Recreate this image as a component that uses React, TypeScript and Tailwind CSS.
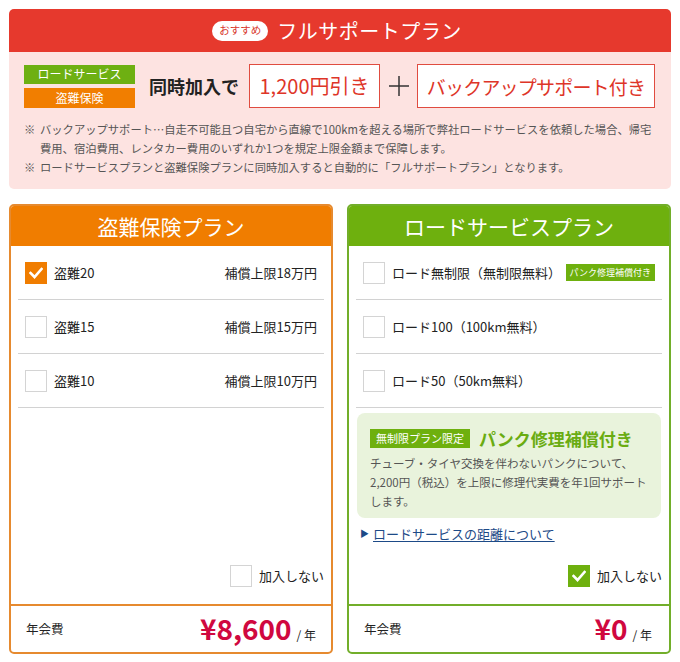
import React from "react";

const Check = () => (
  <svg width="14" height="12" viewBox="0 0 14 12">
    <path d="M1.5 6 L5.5 10 L12.5 2" fill="none" stroke="#fff" strokeWidth="2.6" strokeLinecap="square" />
  </svg>
);

const Box = ({ checked, color }: { checked?: boolean; color: string }) =>
  checked ? (
    <div className={`w-[22px] h-[22px] flex items-center justify-center shrink-0 ${color}`}>
      <Check />
    </div>
  ) : (
    <div className="w-[22px] h-[22px] border border-[#d4d4d4] bg-white shrink-0" />
  );

export default function App() {
  return (
    <div className="w-[680px] h-[662px] bg-white p-[9px] font-['Meiryo','Noto_Sans_CJK_JP',sans-serif] text-[#222]">
      {/* Top box */}
      <div className="rounded-[5px] overflow-hidden">
        <div className="h-[43px] bg-[#e6392d] flex items-center justify-center gap-[9px] pr-[6px]">
          <span className="bg-white text-[#d8352a] rounded-full h-[20px] px-[7px] flex items-center text-[10.5px] leading-none">おすすめ</span>
          <span className="text-white text-[20px] leading-none tracking-[0.5px]">フルサポートプラン</span>
        </div>
        <div className="bg-[#fde3e1] px-[15px] pt-[12px] pb-[12px]">
          <div className="flex items-center">
            <div className="w-[111px] flex flex-col gap-[4px]">
              <div className="h-[19px] bg-[#6eb012] text-white text-[12px] flex items-center justify-center leading-none">ロードサービス</div>
              <div className="h-[20px] bg-[#f17e00] text-white text-[12px] flex items-center justify-center leading-none">盗難保険</div>
            </div>
            <div className="ml-[14px] text-[18px] font-bold text-[#222] leading-none">同時加入で</div>
            <div className="ml-[10px] w-[131px] h-[44px] bg-white border border-[#e04c40] text-[#de3528] text-[20px] flex items-center justify-center leading-none whitespace-nowrap">1,200円引き</div>
            <div className="w-[37px] flex items-center justify-center">
              <svg width="20" height="20" viewBox="0 0 20 20">
                <path d="M10 0 V20 M0 10 H20" stroke="#333" strokeWidth="1.5" />
              </svg>
            </div>
            <div className="w-[238px] h-[44px] bg-white border border-[#e04c40] text-[#de3528] text-[19px] tracking-[-0.8px] flex items-center justify-center leading-none whitespace-nowrap">バックアップサポート付き</div>
          </div>
          <div className="mt-[12px] text-[11.3px] leading-[19px] text-[#555]">
            <div className="flex">
              <span className="w-[16px] shrink-0">※</span>
              <span>バックアップサポート…自走不可能且つ自宅から直線で100kmを超える場所で弊社ロードサービスを依頼した場合、帰宅<br />費用、宿泊費用、レンタカー費用のいずれか1つを規定上限金額まで保障します。</span>
            </div>
            <div className="flex">
              <span className="w-[16px] shrink-0">※</span>
              <span>ロードサービスプランと盗難保険プランに同時加入すると自動的に「フルサポートプラン」となります。</span>
            </div>
          </div>
        </div>
      </div>

      {/* Cards */}
      <div className="mt-[15px] flex gap-[14px]">
        {/* Left */}
        <div className="w-[324px] h-[450px] border-2 border-[#e68a2f] rounded-[5px] overflow-hidden flex flex-col">
          <div className="h-[40px] bg-[#f07d00] text-white text-[21px] flex items-center justify-center leading-none">盗難保険プラン</div>
          {[
            ["盗難20", "補償上限18万円", true],
            ["盗難15", "補償上限15万円", false],
            ["盗難10", "補償上限10万円", false],
          ].map(([a, b, c]) => (
            <div key={a as string} className="mx-[7px] h-[54px] border-b border-[#d2d2d2] flex items-center px-[7px]">
              <Box checked={c as boolean} color="bg-[#f07d00]" />
              <span className="ml-[7px] text-[13px]">{a as string}</span>
              <span className="ml-auto text-[13px]">{b as string}</span>
            </div>
          ))}
          <div className="flex-1 flex items-end justify-end pr-[7px] pb-[17px]">
            <div className="flex items-center gap-[7px]">
              <Box color="" />
              <span className="text-[13px]">加入しない</span>
            </div>
          </div>
          <div className="h-[48px] border-t-2 border-[#e68a2f] flex items-center px-[15px]">
            <span className="text-[12.5px]">年会費</span>
            <span className="ml-auto flex items-baseline">
              <span className="text-[28px] font-bold text-[#d0083f] leading-none">¥8,600</span>
              <span className="ml-[5px] text-[12px]">/ 年</span>
            </span>
          </div>
        </div>

        {/* Right */}
        <div className="w-[324px] h-[450px] border-2 border-[#72ae2a] rounded-[5px] overflow-hidden flex flex-col">
          <div className="h-[40px] bg-[#6eb00e] text-white text-[21px] flex items-center justify-center leading-none">ロードサービスプラン</div>
          <div className="mx-[7px] h-[54px] border-b border-[#d2d2d2] flex items-center px-[7px]">
            <Box color="" />
            <span className="ml-[7px] text-[13px]">ロード無制限（無制限無料）</span>
            <span className="ml-auto bg-[#6eb00e] text-white text-[9px] h-[17px] px-[4px] flex items-center leading-none">パンク修理補償付き</span>
          </div>
          <div className="mx-[7px] h-[54px] border-b border-[#d2d2d2] flex items-center px-[7px]">
            <Box color="" />
            <span className="ml-[7px] text-[13px]">ロード100（100km無料）</span>
          </div>
          <div className="mx-[7px] h-[54px] border-b border-[#d2d2d2] flex items-center px-[7px]">
            <Box color="" />
            <span className="ml-[7px] text-[13px]">ロード50（50km無料）</span>
          </div>
          <div className="mx-[8px] mt-[5px] h-[105px] bg-[#e9f3dc] rounded-[8px] px-[13px] pt-[16px]">
            <div className="flex items-center">
              <span className="bg-[#6eb00e] text-white text-[11px] h-[19px] px-[6px] flex items-center leading-none">無制限プラン限定</span>
              <span className="ml-[9px] text-[#6aac12] text-[17px] font-bold leading-none">パンク修理補償付き</span>
            </div>
            <div className="mt-[6px] text-[11.5px] leading-[19px] text-[#555]">
              チューブ・タイヤ交換を伴わないパンクについて、<br />
              2,200円（税込）を上限に修理代実費を年1回サポートします。
            </div>
          </div>
          <div className="mt-[6px] ml-[11px] flex items-center text-[13px] text-[#1d4a87]">
            <span className="text-[9px] mr-[4px]">▶</span>
            <span className="underline underline-offset-2">ロードサービスの距離について</span>
          </div>
          <div className="flex-1 flex items-end justify-end pr-[7px] pb-[17px]">
            <div className="flex items-center gap-[7px]">
              <Box checked color="bg-[#6eb00e]" />
              <span className="text-[13px]">加入しない</span>
            </div>
          </div>
          <div className="h-[48px] border-t-2 border-[#72ae2a] flex items-center px-[15px]">
            <span className="text-[12.5px]">年会費</span>
            <span className="ml-auto flex items-baseline pr-[2px]">
              <span className="text-[28px] font-bold text-[#d0083f] leading-none">¥0</span>
              <span className="ml-[5px] text-[12px]">/ 年</span>
            </span>
          </div>
        </div>
      </div>
    </div>
  );
}
